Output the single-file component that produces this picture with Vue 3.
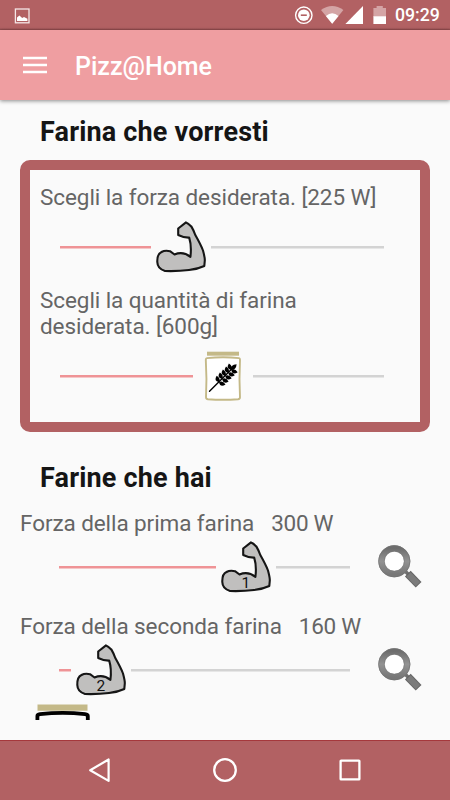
<script setup>
const ARM =
  'M36 7.4 Q38 8 41.3 11.4 Q44 16 45.3 20 Q51 30 53 35.5 Q55 43 54.8 45.5 L54.3 51 Q48 54 39 55 Q28 56.4 15 56 Q7.4 53.5 7.3 47 Q7 39 11.5 37 Q15 35 20 36.2 L24.5 39.5 Q33 36 40.4 41.8 Q41.8 31 39.2 22.6 Q34 22.8 28.2 20 L28.2 13.5 Z'

const goals = [
  { label: 'Scegli la forza desiderata. [225 W]', icon: 'arm', done: 91, kind: 'strength' },
  { label: 'Scegli la quantità di farina desiderata. [600g]', icon: 'jar', done: 133, kind: 'amount' },
]

const flours = [
  { label: 'Forza della prima farina', value: '300 W', done: 157, mark: '1' },
  { label: 'Forza della seconda farina', value: '160 W', done: 11.5, mark: '2' },
]

const grains = [
  [24.3, 37.2], [27.4, 34.1], [30.5, 31], [33.6, 27.9], [36.5, 25],
]
</script>

<template>
  <div class="screen">
    <header class="status">
      <svg class="picture" viewBox="0 0 16 16">
        <rect x="1.4" y="1" width="13.6" height="13.8" fill="none" stroke="#f5e6e6" stroke-width="1.3" />
        <path d="M3 13V9.5L5.4 7.6L8.2 10L10 9L13.4 10.7V13Z" fill="#fff" />
      </svg>
      <svg class="indicators" viewBox="0 0 94 20">
        <circle cx="9.8" cy="10.2" r="8.2" fill="none" stroke="#fff" stroke-width="1.4" />
        <circle cx="9.8" cy="10.2" r="5.8" fill="#fff" />
        <path d="M6.8 10.2H12.8" stroke="#b26163" stroke-width="1.6" />
        <path d="M27 5Q38.2-2.8 49.4 5L38.2 18.8Z" fill="#d4a4a5" />
        <path d="M31.9 11Q38.2 5.5 44.5 11L38.2 18.8Z" fill="#fff" />
        <path d="M69 1V19H51.4Z" fill="#fff" />
        <path d="M79.4 3H82.6V1H88.8V3H92V12H79.4Z" fill="#d4a4a5" />
        <path d="M79.4 11.3H92V19H79.4Z" fill="#fff" />
      </svg>
      <span class="clock">09:29</span>
    </header>

    <div class="toolbar">
      <svg class="menu" viewBox="0 0 24 18">
        <path d="M0 2H24M0 9H24M0 16H24" stroke="#fff" stroke-width="2.7" />
      </svg>
      <span class="title">Pizz@Home</span>
    </div>

    <main class="content">
      <h2 class="heading">Farina che vorresti</h2>

      <section class="card">
        <template v-for="g in goals" :key="g.kind">
          <p class="label">{{ g.label }}</p>
          <div class="slider" :class="g.kind">
            <span class="done" :style="{ width: g.done + 'px' }"></span>
            <svg v-if="g.icon === 'arm'" class="thumb" viewBox="1 0 60 64">
              <path :d="ARM" fill="#c0bfbe" stroke="#151515" stroke-width="2.1" stroke-linejoin="round" />
            </svg>
            <svg v-else class="thumb" viewBox="-2 -.7 60 64">
              <path d="M12 7H44V11H12Z" fill="#c4b988" />
              <path d="M12 13.4Q28 11.8 44 13.4Q45 13.6 45 15Q44 34 45 52.5Q45 54.3 43 54.5Q28 55.6 13 54.5Q11 54.3 11 52.5Q12 34 10.8 15Q10.8 13.6 12 13.4Z" fill="#fff" stroke="#c4b988" stroke-width="1.9" />
              <path d="M14.5 46.5L40 21" stroke="#000" stroke-width="1.4" stroke-linecap="round" />
              <g v-for="(p, i) in grains" :key="i" :transform="`translate(${p[0]} ${p[1]})`">
                <path d="M-.3 .3Q-6-1-2.6-6.2Q2-3.2-.3 .3Z" />
                <path d="M-.3 .3Q1 6 6.2 2.6Q3.2-2-.3 .3Z" />
              </g>
              <path d="M35.6 25.4Q35.2 20 41.6 19.6Q41.2 25.8 35.6 25.4Z" />
            </svg>
            <span class="rest"></span>
          </div>
        </template>
      </section>

      <h2 class="heading owned">Farine che hai</h2>

      <section v-for="f in flours" :key="f.mark" class="flour">
        <p class="label"><span>{{ f.label }}</span><span class="value">{{ f.value }}</span></p>
        <div class="row">
          <div class="slider">
            <span class="done" :style="{ width: f.done + 'px' }"></span>
            <svg class="thumb" viewBox="1 0 60 64">
              <path :d="ARM" fill="#c0bfbe" stroke="#151515" stroke-width="2.1" stroke-linejoin="round" />
              <text x="30.8" y="52.7" text-anchor="middle" class="mark">{{ f.mark }}</text>
            </svg>
            <span class="rest"></span>
          </div>
          <svg class="search" viewBox="0 0 60 60">
            <defs>
              <linearGradient :id="'lens' + f.mark" x1="0" y1="0" x2="0" y2="1">
                <stop offset="0" stop-color="#6d6d6d" />
                <stop offset=".5" stop-color="#939393" />
                <stop offset="1" stop-color="#777" />
              </linearGradient>
            </defs>
            <path d="M35 35L39 39" stroke="#6f6f6f" stroke-width="3.5" />
            <path d="M37.8 37.6L48.6 48.8" stroke="#666" stroke-width="8" />
            <path d="M38.5 38.3L47.9 48.1" stroke="#7b7b7b" stroke-width="6" />
            <circle cx="24.3" cy="25.2" r="12.9" fill="#fff" :stroke="`url(#lens${f.mark})`" stroke-width="6.2" />
            <circle cx="24.3" cy="25.2" r="15.7" fill="none" stroke="#737373" stroke-width=".7" />
            <circle cx="24.3" cy="25.2" r="10" fill="none" stroke="#757575" stroke-width=".6" />
          </svg>
        </div>
      </section>

      <svg class="next-jar" viewBox="0 0 56 16">
        <path d="M2.5 .6H52.5V6.8H2.5Z" fill="#c4b988" />
        <path d="M2.4 22V12Q2.4 10.6 5 10.2Q28 7.4 50 10.2Q52.8 10.6 52.8 12V22" fill="none" stroke="#000" stroke-width="3.8" />
      </svg>
    </main>

    <nav class="navbar">
      <svg viewBox="0 0 26 26"><path d="M21.6 2.5V23.9L3.2 13.2Z" fill="none" stroke="#fff" stroke-width="2.2" stroke-linejoin="round" /></svg>
      <svg viewBox="0 0 26 26"><circle cx="13" cy="13" r="10.8" fill="none" stroke="#fff" stroke-width="2.3" /></svg>
      <svg viewBox="0 0 26 26"><rect x="3.6" y="3.6" width="18.8" height="18.8" rx=".5" fill="none" stroke="#fff" stroke-width="2.3" /></svg>
    </nav>
  </div>
</template>

<style>
body { margin: 0; background: #fafafa; }
</style>

<style scoped>
.screen {
  display: flex;
  flex-direction: column;
  width: 450px;
  height: 800px;
  overflow: hidden;
  background: #fafafa;
  font-family: Roboto, sans-serif;
  color: #656565;
}
svg { display: block; flex: none; }
.status {
  display: flex;
  align-items: center;
  flex: none;
  box-sizing: border-box;
  height: 30px;
  padding: 1px 9px 0 14px;
  background: linear-gradient(#b26163 28px, #8d484a 30px);
}
.picture { width: 16px; height: 16px; }
.indicators { width: 94px; height: 20px; margin: -1px 0 0 auto; }
.clock {
  width: 46px;
  margin-left: 7px;
  font-size: 17.7px;
  font-weight: 500;
  line-height: 29px;
  color: #fff;
  white-space: nowrap;
}
.toolbar {
  display: flex;
  align-items: center;
  flex: none;
  height: 70px;
  padding-left: 23px;
  background: #ef9ea1;
  box-shadow: 0 1px 4px rgba(0, 0, 0, .45);
}
.menu { width: 24px; height: 18px; margin-bottom: 1px; }
.title {
  margin: 2px 0 0 28px;
  font-size: 25px;
  font-weight: 500;
  color: #fff;
}
.content { flex: none; height: 620px; overflow: hidden; }
.heading {
  margin: 17px 0 0 40px;
  font-size: 27px;
  font-weight: 700;
  line-height: 30px;
  letter-spacing: .17px;
  color: #151515;
}
.card {
  box-sizing: border-box;
  height: 272px;
  margin: 13px 20px 0;
  padding: 14px 0 0;
  border: 10px solid #b26163;
  border-radius: 10px;
}
.label {
  margin: 0;
  font-size: 22.5px;
  font-weight: 400;
  line-height: 26.4px;
  letter-spacing: -.08px;
}
.card .label { padding: 0 90px 0 10px; }
.card .label:first-child { padding-right: 0; }
.slider { display: flex; align-items: center; flex: none; }
.card .slider { width: 324px; margin-left: 30px; }
.strength { height: 74px; margin-bottom: 2.6px; }
.amount { height: 72.6px; }
.done {
  flex: none;
  height: 3px;
  background: linear-gradient(#ef9396 2px, #f5c7c8 2px);
}
.rest {
  flex: 1;
  height: 3px;
  background: linear-gradient(#d3d3d3 2px, #e6e6e6 2px);
}
.thumb { width: 60px; height: 64px; }
.owned { margin-top: 30.5px; }
.flour { box-sizing: border-box; height: 103px; padding-left: 20px; }
.owned + .flour { height: 120px; padding-top: 17px; }
.flour .label { display: flex; gap: 17px; }
.value { letter-spacing: -.3px; }
.row { display: flex; align-items: center; height: 60px; margin-top: 1.2px; }
.row .slider { width: 291px; margin-left: 39px; }
.search { width: 60px; height: 60px; margin: -3px 0 0 20px; }
.mark { font: 400 15.5px Roboto, sans-serif; fill: #111; }
.next-jar { width: 56px; height: 16px; margin-left: 34.5px; margin-top: -12px; }
.navbar {
  display: flex;
  align-items: center;
  justify-content: center;
  gap: 99px;
  flex: none;
  box-sizing: border-box;
  height: 60px;
  margin-top: 20px;
  padding-bottom: 1px;
  border-top: 1px solid #a5383c;
  background: #b26163;
}
.navbar svg { width: 26px; height: 26px; }
</style>
